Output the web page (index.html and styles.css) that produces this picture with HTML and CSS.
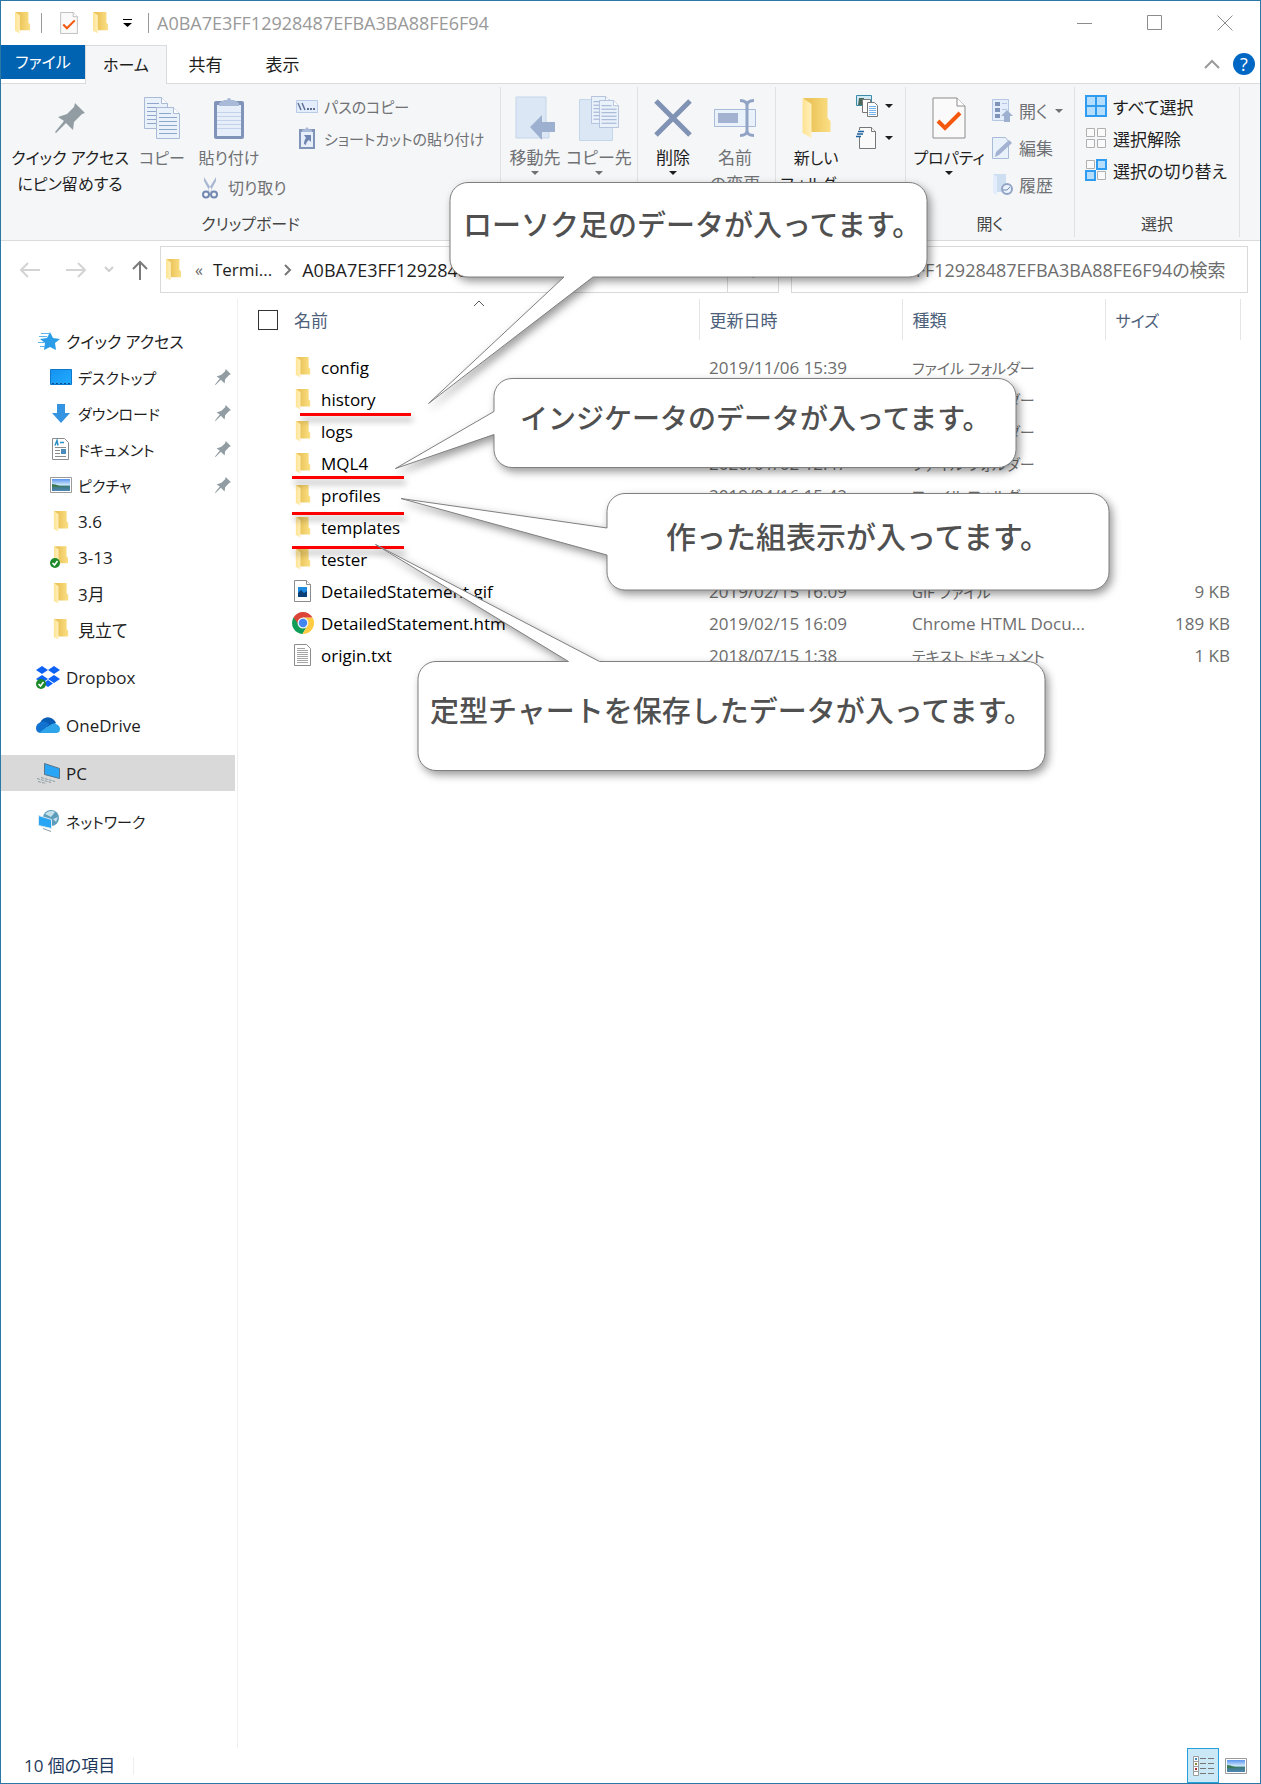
FILE: index.html
```html
<!DOCTYPE html>
<html lang="ja">
<head>
<meta charset="utf-8">
<meta name="viewport" content="width=device-width, initial-scale=1">
<title>A0BA7E3FF12928487EFBA3BA88FE6F94</title>
<link rel="stylesheet" href="styles.css">
</head>
<body>
<svg class="defs" aria-hidden="true">
  <defs>
    <linearGradient id="fold" x1="0" x2="1"><stop offset=".3" stop-color="#ecc65c"/><stop offset="1" stop-color="#fbdf85"/></linearGradient>
    <linearGradient id="flap" x1="0" x2="1"><stop offset="0" stop-color="#ffe391"/><stop offset="1" stop-color="#ffefbc"/></linearGradient>
    <linearGradient id="sky" x1="0" y1="0" x2="0" y2="1"><stop offset="0" stop-color="#5b95ee"/><stop offset=".5" stop-color="#cfe9fb"/><stop offset=".6" stop-color="#3d7a78"/><stop offset="1" stop-color="#4f86b8"/></linearGradient>
    <linearGradient id="blue" x1="0" y1="0" x2="1" y2="1"><stop offset="0" stop-color="#1492f0"/><stop offset="1" stop-color="#22acff"/></linearGradient>
    <symbol id="folder" viewBox="0 0 28 41"><path fill="url(#fold)" d="M1 0h24v20l3 3v11H9z"/><path fill="url(#flap)" d="M0 0l9 6v34l-9-5z"/></symbol>
    <symbol id="pin" viewBox="0 0 30 30"><path fill="#929da3" d="M20 0l10 10-3 1-8 8-1 8-7-7L1 30l-1-1 9-11-6-4 9-3 7-7z"/></symbol>
    <symbol id="caret" viewBox="0 0 8 4"><path fill="currentColor" d="M0 0h8L4 4z"/></symbol>
    <symbol id="page" viewBox="0 0 24 32" preserveAspectRatio="none"><path fill="#e9f1fb" stroke="#a9b9d6" d="M.5.5h17l6 6v25H.5z"/><path fill="#fff" stroke="#a9b9d6" d="M17.500.5v6h6"/><path stroke="#8fa5c9" d="M3 6.500h12M3 10.500h18M3 14.500h18M3 18.500h18M3 22.500h18M3 26.500h18"/></symbol>
    <symbol id="check-page" viewBox="0 0 34 42"><path fill="#fafafa" stroke="#8c8c8c" d="M1 1h24l8 8v32H1z"/><path fill="#fff" stroke="#8c8c8c" d="M25 1v8h8"/><path fill="none" stroke="#f4580d" stroke-width="4" d="M6 24l7 7 15-15"/></symbol>
    <symbol id="ok" viewBox="0 0 10 10"><circle cx="5" cy="5" r="5" fill="#1c8a2b"/><path fill="none" stroke="#fff" stroke-width="1.600" d="M2.500 5l2 2 3-4"/></symbol>
    <symbol id="photo" viewBox="0 0 22 16"><path fill="#fff" stroke="#9b9b9b" d="M.5.5h21v15H.5z"/><path fill="url(#sky)" d="M2 2h18v12H2z"/><path fill="#3b7a55" d="M2 7c5 0 8 3 12 3H2z"/></symbol>
  </defs>
</svg>

<div class="window">
  <header class="titlebar">
    <svg class="folder-sm" aria-hidden="true"><use href="#folder"/></svg>
    <span class="bar"></span>
    <button class="quick" aria-label="プロパティ"><svg width="18" height="22"><use href="#check-page"/></svg></button>
    <button class="quick quick-folder" aria-label="新しいフォルダー"><svg class="folder-sm"><use href="#folder"/></svg></button>
    <button class="quick quick-more" aria-label="カスタマイズ"><svg width="9" height="8" viewBox="0 0 9 8"><path d="M0 0h9v1H0zM0 4h9L4.500 8z"/></svg></button>
    <span class="bar"></span>
    <h1>A0BA7E3FF12928487EFBA3BA88FE6F94</h1>
    <div class="controls">
      <button aria-label="最小化"><svg width="16" height="16"><path d="M0 8.500h15"/></svg></button>
      <button aria-label="最大化"><svg width="16" height="16"><path d="M.5.5h14v14H.5z"/></svg></button>
      <button aria-label="閉じる"><svg width="16" height="16"><path d="M.5.5l15 15M15.500.5l-15 15"/></svg></button>
    </div>
  </header>

  <nav class="tabs">
    <button class="tab tab-file">ファイル</button>
    <button class="tab tab-active">ホーム</button>
    <button class="tab">共有</button>
    <button class="tab">表示</button>
    <div class="tabs-end">
      <button aria-label="リボンの最小化"><svg width="16" height="10"><path fill="none" stroke="#9a9a9a" stroke-width="2" d="M1 9l7-7 7 7"/></svg></button>
      <button class="help" aria-label="ヘルプ">?</button>
    </div>
  </nav>

  <section class="ribbon">
    <div class="group g-clip">
      <div class="group-body">
        <button class="big w-pin"><span class="ico"><svg width="30" height="30"><use href="#pin"/></svg></span><span>クイック アクセス<br>にピン留めする</span></button>
        <button class="big w-copy off"><span class="ico"><svg width="36" height="42" viewBox="0 0 36 42"><use href="#page" width="24" height="32"/><use href="#page" x="12" y="10" width="24" height="32"/></svg></span><span>コピー</span></button>
        <div class="paste-col">
          <button class="big w-paste off"><span class="ico"><svg width="30" height="42" viewBox="0 0 30 42"><rect y="4" width="30" height="38" rx="2" fill="#7f94b8"/><path fill="#e6eefa" d="M3 8h24v31H3z"/><path stroke="#c3d2ea" d="M3 15.500h24M3 19.500h24M3 23.500h24M3 27.500h24M3 31.500h24"/><path fill="#a9bad8" d="M5 9V6l5-3h3a2 2 0 0 1 4 0h3l5 3v3z"/></svg></span><span>貼り付け</span></button>
          <button class="small off"><svg width="16" height="23" viewBox="0 0 16 23"><path fill="#a9b8d2" d="M2 1l8 13-2 2L2 5zM14 1L6 14l2 2 6-11z"/><g fill="none" stroke="#7388b0" stroke-width="2"><circle cx="4" cy="18.500" r="3"/><circle cx="12" cy="18.500" r="3"/></g></svg><span>切り取り</span></button>
        </div>
        <div class="list list-kana">
          <button class="small off"><svg width="22" height="13" viewBox="0 0 22 13"><path fill="#e3edfb" stroke="#b9cae6" d="M.5.5h21v12H.5z"/><path stroke="#5d6f93" stroke-width="1.500" d="M2 3l3 7M6 3l3 7"/><path fill="#5d6f93" d="M11 8h2v2h-2zM14 8h2v2h-2zM17 8h2v2h-2z"/></svg><span>パスのコピー</span></button>
          <button class="small off"><svg width="22" height="22" viewBox="0 0 22 22"><path fill="#7f94b8" d="M3 2h16v20H3z"/><path fill="#e6eefa" d="M5 5h12v15H5z"/><path fill="#a9bad8" d="M6 5V3l3-1 2-2 2 2 3 1v2z"/><path fill="#6f86b0" d="M8 8h7v7l-2-2c-2 1-3 3-3 5l-2-1c0-3 1-5 2-6z"/></svg><span>ショートカットの貼り付け</span></button>
        </div>
      </div>
      <div class="group-label">クリップボード</div>
    </div>

    <div class="group g-move">
      <div class="group-body">
        <button class="big w-move off"><span class="ico"><svg width="40" height="44" viewBox="0 0 40 44"><path fill="#dce7f6" stroke="#c5d5ea" d="M1 1h30v25l3 4v12H1z"/><path fill="#9eb0cf" d="M15 31l12-12v7h13v10H27v8z"/></svg></span><span>移動先</span><svg class="caret"><use href="#caret"/></svg></button>
        <button class="big w-move off"><span class="ico"><svg width="40" height="46" viewBox="0 0 40 46"><path fill="#dce7f6" stroke="#c5d5ea" d="M.5 4.500h30v24l3 4v13H.5z"/><use href="#page" x="12" y="1" width="20" height="28"/><use href="#page" x="20" y="5" width="20" height="28"/></svg></span><span>コピー先</span><svg class="caret"><use href="#caret"/></svg></button>
      </div>
    </div>

    <div class="group g-edit">
      <div class="group-body">
        <button class="big w-del"><span class="ico"><svg width="38" height="38"><path stroke="#8093b5" stroke-width="5" d="M2 2l34 34M36 2L2 36"/></svg></span><span>削除</span><svg class="caret"><use href="#caret"/></svg></button>
        <button class="big w-ren off"><span class="ico"><svg width="42" height="38" viewBox="0 0 42 38"><path fill="#e9f1fb" stroke="#a9bbd9" d="M.5 10.500h41v17H.5z"/><path fill="#a2b2d0" d="M4 14h20v10H4z"/><path fill="none" stroke="#92a4c6" stroke-width="3" d="M26 1.500c5 0 7 2 7 5v25c0 3-2 5-7 5M40 1.500c-5 0-7 2-7 5v25c0 3 2 5 7 5"/></svg></span><span>名前<br>の変更</span></button>
      </div>
    </div>

    <div class="group g-new">
      <div class="group-body">
        <button class="big w-new"><span class="ico"><svg width="29" height="41"><use href="#folder"/></svg></span><span>新しい<br>フォルダー</span></button>
        <div class="list">
          <button class="small" aria-label="新しいアイテム"><svg width="22" height="22" viewBox="0 0 22 22"><path fill="#cfeaf5" stroke="#3c8ca8" d="M.5.5h15v10H.5z"/><path fill="#4b6b5a" d="M3 3h5v7H2z"/><path fill="#fff" stroke="#777" d="M6.500 4.500h8v13h-8z"/><path fill="#fff" stroke="#777" d="M11.500 7.500h7l3 3v11h-10z"/><path stroke="#78b4ec" d="M13 11.500h7M13 13.500h7M13 15.500h7M13 17.500h7M13 19.500h7"/></svg><svg class="caret"><use href="#caret"/></svg></button>
          <button class="small" aria-label="ショートカット"><svg width="22" height="22" viewBox="0 0 22 22"><path fill="#fafafa" stroke="#777" d="M3.500.5h12l4 4v17h-16z"/><path fill="#fff" stroke="#777" d="M15.500.5v4h4"/><path stroke="#f5f6f7" stroke-width="7" d="M0 6.500h4"/><path stroke="#1f62a0" stroke-width="1.500" d="M2 4.500h6M1 7h6M0 9.500h5"/></svg><svg class="caret"><use href="#caret"/></svg></button>
        </div>
      </div>
    </div>

    <div class="group g-open">
      <div class="group-body">
        <button class="big w-prop"><span class="ico"><svg width="34" height="42"><use href="#check-page"/></svg></span><span>プロパティ</span><svg class="caret"><use href="#caret"/></svg></button>
        <div class="list list-tall">
          <button class="small off"><svg width="21" height="23" viewBox="0 0 21 23"><path fill="#e3edfb" stroke="#b5c6e2" d="M.5.5h16v21H.5z"/><path fill="#7f94b8" d="M3 3h5v4H3zM3 9h5v4H3zM3 15h5v4H3z"/><path stroke="#b5c6e2" d="M10 4.500h5M10 10.500h5"/><path fill="#9eb0cf" d="M15 11l6 6h-3v6h-6v-6H9z"/></svg><span>開く</span><svg class="caret"><use href="#caret"/></svg></button>
          <button class="small off"><svg width="21" height="23" viewBox="0 0 21 23"><path fill="#e9f1fb" stroke="#a9bbd9" d="M.5 1.500h13l3 4v17H.5z"/><path fill="#a2b2d0" d="M17 4l3 3L7 19l-4 2 1-5z"/></svg><span>編集</span></button>
          <button class="small off"><svg width="21" height="23" viewBox="0 0 21 23"><path fill="#cfdff2" d="M1 1h13v18H5z"/><path fill="#e3edfb" d="M1 1l4 3v18l-4-2z"/><circle cx="15" cy="16" r="5" fill="#e9f1fb" stroke="#92a4c6" stroke-width="2"/><path fill="none" stroke="#7388b0" d="M11 17h4l3-3"/></svg><span>履歴</span></button>
        </div>
      </div>
      <div class="group-label">開く</div>
    </div>

    <div class="group g-select">
      <div class="group-body">
        <div class="list">
          <button class="small"><svg width="22" height="22" viewBox="0 0 22 22"><path fill="#b5defc" stroke="#2e9cf0" stroke-width="2" d="M1 1h20v20H1zM11 1v20M1 11h20"/></svg><span>すべて選択</span></button>
          <button class="small"><svg width="22" height="22" viewBox="0 0 22 22"><path fill="#fafafa" stroke="#b0b0b0" d="M1.500 1.500h8v8h-8zM12.500 1.500h8v8h-8zM1.500 12.500h8v8h-8zM12.500 12.500h8v8h-8z"/></svg><span>選択解除</span></button>
          <button class="small"><svg width="22" height="22" viewBox="0 0 22 22"><path fill="#fafafa" stroke="#b0b0b0" d="M1.500 1.500h8v8h-8zM12.500 12.500h8v8h-8z"/><path fill="#b5defc" stroke="#2e9cf0" stroke-width="2" d="M12 1h9v9h-9zM1 12h9v9H1z"/></svg><span>選択の切り替え</span></button>
        </div>
      </div>
      <div class="group-label">選択</div>
    </div>
  </section>

  <div class="navbar">
    <div class="history">
      <button class="back" aria-label="戻る"><svg width="20" height="16"><path stroke="#d4d4d4" stroke-width="2" fill="none" d="M20 8H2M8 1L1 8l7 7"/></svg></button>
      <button aria-label="進む"><svg width="20" height="16"><path stroke="#d4d4d4" stroke-width="2" fill="none" d="M0 8h18M12 1l7 7-7 7"/></svg></button>
      <button aria-label="最近表示した場所"><svg width="10" height="7"><path stroke="#cfcfcf" stroke-width="2" fill="none" d="M1 1l4 4 4-4"/></svg></button>
      <button aria-label="上へ"><svg width="16" height="20"><path stroke="#7a7a7a" stroke-width="2" fill="none" d="M8 20V2M1 9l7-7 7 7"/></svg></button>
    </div>
    <div class="address">
      <svg class="folder-sm" aria-hidden="true"><use href="#folder"/></svg>
      <span class="more">«</span>
      <a href="#terminal">Termi...</a>
      <svg width="8" height="12" aria-hidden="true"><path stroke="#777" stroke-width="2" fill="none" d="M1 1l5 5-5 5"/></svg>
      <a class="current" href="#current">A0BA7E3FF12928487EFBA3BA88FE6F94</a>
      <button class="refresh" aria-label="更新"><svg width="16" height="16"><path fill="none" stroke="#777" stroke-width="2" d="M13 5a6 6 0 1 0 1 4M14 1v5H9"/></svg></button>
    </div>
    <input class="search" type="search" aria-label="検索" placeholder="A0BA7E3FF12928487EFBA3BA88FE6F94の検索">
  </div>

  <div class="content">
    <nav class="sidebar">
      <ul>
        <li class="quick-root"><a href="#quick"><svg width="24" height="20" viewBox="0 0 24 20"><path fill="#2a9ce8" d="M14 1l3 6 7 1-5 4 1 7-6-3-6 3 1-7-5-4 7-1z"/><path stroke="#5ab4ee" d="M5 2.500h8M3 5.500h8M2 11.500h6M4 15.500h5"/></svg>クイック アクセス</a></li>
        <li class="sub kana"><a href="#desktop"><svg width="22" height="16"><path fill="url(#blue)" stroke="#0f78cb" d="M.5.5h21v15H.5z"/><path stroke="#0b4f8a" stroke-dasharray="2 2" d="M2 14.500h18"/></svg>デスクトップ</a><svg class="pinned"><use href="#pin"/></svg></li>
        <li class="sub kana"><a href="#downloads"><svg width="22" height="19"><path fill="#3594e2" d="M7 0h8v9h5l-9 10L2 9h5z"/></svg>ダウンロード</a><svg class="pinned"><use href="#pin"/></svg></li>
        <li class="sub kana"><a href="#documents"><svg width="22" height="22"><path fill="#fff" stroke="#8c8c8c" d="M2.500.5h12l4 4v17h-16z"/><path stroke="#2b8fc4" fill="none" stroke-width="1.500" d="M5 7.500l2-5 1 5M10 4.500h4"/><path stroke="#8c8c8c" d="M5 9.500h11M5 12.500h5M5 15.500h5M5 18.500h11"/><path fill="#4b8bbb" d="M11 11h5v5h-5z"/></svg>ドキュメント</a><svg class="pinned"><use href="#pin"/></svg></li>
        <li class="sub kana"><a href="#pictures"><svg width="22" height="16"><use href="#photo"/></svg>ピクチャ</a><svg class="pinned"><use href="#pin"/></svg></li>
        <li class="sub"><a href="#f36"><svg class="folder-nav"><use href="#folder"/></svg>3.6</a></li>
        <li class="sub"><a href="#f313"><svg width="22" height="22"><use href="#folder" x="4" width="14" height="21"/><use href="#ok" y="12" width="10" height="10"/></svg>3-13</a></li>
        <li class="sub"><a href="#f3"><svg class="folder-nav"><use href="#folder"/></svg>3月</a></li>
        <li class="sub"><a href="#mitate"><svg class="folder-nav"><use href="#folder"/></svg>見立て</a></li>
        <li class="top"><a href="#dropbox"><svg width="24" height="23" viewBox="0 0 24 23"><path fill="#0d63f5" d="M6 0l6 4-6 4-6-4zM18 0l6 4-6 4-6-4zM6 9l6 4-6 4-6-4zM18 9l6 4-6 4-6-4zM12 14l5 3.500-5 3.500-5-3.500z"/><use href="#ok" y="13" width="10" height="10"/></svg>Dropbox</a></li>
        <li class="top"><a href="#onedrive"><svg width="24" height="16" viewBox="0 0 24 16"><path fill="#0a5db4" d="M4 6C6 1 11-1 15 1c3 1 4 3 5 5l-8 5z"/><path fill="#1173cf" d="M5 5c3-1 6 0 8 2L7 16H5C1 16 0 13 0 11c0-3 2-5 5-6z"/><path fill="#2ea5ea" d="M4 15l10-7c2-1 4-2 6-1 3 1 4 3 4 5 0 3-2 4-4 4H5z"/></svg>OneDrive</a></li>
        <li class="top selected"><a href="#pc" aria-current="page"><svg width="24" height="21" viewBox="0 0 24 21"><path fill="#29a5f5" stroke="#56748a" d="M8.500.5l15 5v10l-15-4z"/><path stroke="#8a9aa5" stroke-dasharray="3 1" d="M1 15.500l14 4M5 14.500l14 4M2 18.500l8 2"/></svg>PC</a></li>
        <li class="top kana"><a href="#network"><svg width="24" height="22" viewBox="0 0 24 22"><circle cx="15" cy="8" r="8" fill="#5b9dbb"/><path fill="#c6e0ea" d="M9 4c4-4 8-3 10-2l-4 5zM17 9l5-2-2 5z"/><path fill="#29a5f5" stroke="#dfeaf0" d="M2.500 5.500l13 4v9l-13-3z"/><path stroke="#8a9aa5" d="M7 18.500l8 3"/></svg>ネットワーク</a></li>
      </ul>
    </nav>

    <main class="files">
      <table>
        <colgroup><col class="c-check"><col><col class="c-date"><col class="c-type"><col class="c-size"><col class="c-end"></colgroup>
        <thead>
          <tr>
            <th><input type="checkbox" aria-label="すべて選択"></th>
            <th class="h-name line">名前<svg class="sort" width="12" height="7"><path fill="none" stroke="#555" d="M1 6l5-5 5 5"/></svg></th>
            <th class="line">更新日時</th><th class="line">種類</th><th class="line h-size">サイズ</th><th></th>
          </tr>
        </thead>
        <tbody>
          <tr><td></td><td class="name"><span><svg class="folder-row"><use href="#folder"/></svg>config</span></td><td>2019/11/06 15:39</td><td class="kana">ファイル フォルダー</td><td></td><td></td></tr>
          <tr><td></td><td class="name"><span><svg class="folder-row"><use href="#folder"/></svg>history</span></td><td></td><td class="kana">ファイル フォルダー</td><td></td><td></td></tr>
          <tr><td></td><td class="name"><span><svg class="folder-row"><use href="#folder"/></svg>logs</span></td><td></td><td class="kana">ファイル フォルダー</td><td></td><td></td></tr>
          <tr><td></td><td class="name"><span><svg class="folder-row"><use href="#folder"/></svg>MQL4</span></td><td>2020/01/02 12:47</td><td class="kana">ファイル フォルダー</td><td></td><td></td></tr>
          <tr><td></td><td class="name"><span><svg class="folder-row"><use href="#folder"/></svg>profiles</span></td><td>2019/04/16 15:42</td><td class="kana">ファイル フォルダー</td><td></td><td></td></tr>
          <tr><td></td><td class="name"><span><svg class="folder-row"><use href="#folder"/></svg>templates</span></td><td></td><td></td><td></td><td></td></tr>
          <tr><td></td><td class="name"><span><svg class="folder-row"><use href="#folder"/></svg>tester</span></td><td></td><td></td><td></td><td></td></tr>
          <tr><td></td><td class="name"><span><svg width="22" height="22"><path fill="#fff" stroke="#8c8c8c" d="M2.500.5h12l4 4v17h-16z"/><path fill="#fff" stroke="#8c8c8c" d="M14.500.5v4h4"/><path fill="#1e8ae0" d="M6 7h9v10H6z"/><path fill="#0b3f78" d="M6 17v-4l3-3 3 3 3-2v6z"/></svg>DetailedStatement.gif</span></td><td>2019/02/15 16:09</td><td class="kana">GIF ファイル</td><td class="size">9 KB</td><td></td></tr>
          <tr><td></td><td class="name"><span><svg width="22" height="22" viewBox="0 0 22 22"><path fill="#0f9d58" d="M1.500 5.500a11 11 0 0 0 9 16.500l5-8.500L11 11z"/><path fill="#fc4" d="M10.500 22a11 11 0 0 0 10-16.500H11l4.500 8z"/><path fill="#db4437" d="M1.500 5.500a11 11 0 0 1 19 0H11L7 13z"/><circle cx="11" cy="11" r="5.500" fill="#f1f1f1"/><circle cx="11" cy="11" r="4.200" fill="#4285f4"/></svg>DetailedStatement.htm</span></td><td>2019/02/15 16:09</td><td>Chrome HTML Docu...</td><td class="size">189 KB</td><td></td></tr>
          <tr><td></td><td class="name"><span><svg width="22" height="22"><path fill="#fff" stroke="#8c8c8c" d="M2.500.5h12l4 4v17h-16z"/><path stroke="#a5a5a5" d="M5 4.500h8M5 6.500h11M5 8.500h11M5 10.500h11M5 12.500h11M5 14.500h11M5 16.500h11M5 18.500h11"/></svg>origin.txt</span></td><td>2018/07/15 1:38</td><td class="kana">テキスト ドキュメント</td><td class="size">1 KB</td><td></td></tr>
        </tbody>
      </table>
    </main>
  </div>

  <footer class="status">
    <span>10 個の項目</span>
    <div class="views">
      <button class="view-on" aria-label="詳細"><svg width="22" height="22" viewBox="0 0 22 22"><path fill="#fff" stroke="#9b9b9b" d="M1.500 1.500h5v5h-5zM1.500 6.500h5v5h-5zM1.500 11.500h5v5h-5zM1.500 16.500h5v4h-5z"/><path fill="#3f87b5" d="M3 3h2v2H3z"/><path fill="#8a8438" d="M3 8h2v2H3z"/><path fill="#a33" d="M3 13h2v2H3z"/><path stroke="#777" d="M8 3.500h6M16 3.500h6M8 8.500h6M16 8.500h6M8 13.500h6M16 13.500h6M8 18.500h6M16 18.500h6"/></svg></button>
      <button aria-label="大アイコン"><svg width="22" height="16"><use href="#photo"/></svg></button>
    </div>
  </footer>

  <div class="notes">
    <svg class="shapes" aria-hidden="true">
      <g class="marks"><path d="M300 414.500h111M292 477.500h112M292 513.500h112M292 547.500h112"/></g>
      <g class="bubbles">
        <path d="M468 182.500H909a18 18 0 0 1 18 18V259a18 18 0 0 1-18 18H593L428.500 403.500 564 277H468a18 18 0 0 1-18-18V200.500a18 18 0 0 1 18-18z"/>
        <path d="M512 378.500H998a18 18 0 0 1 18 18V449.500a18 18 0 0 1-18 18H512a18 18 0 0 1-18-18V434.500L395.500 468.500 494 411.500V396.500a18 18 0 0 1 18-18z"/>
        <path d="M625 493.500H1091a18 18 0 0 1 18 18V572a18 18 0 0 1-18 18H625a18 18 0 0 1-18-18V555L401 498.500 607 528V511.500a18 18 0 0 1 18-18z"/>
        <path d="M436 661.500H568.500L375.500 544.500 599.500 661.500H1027a18 18 0 0 1 18 18V752.500a18 18 0 0 1-18 18H436a18 18 0 0 1-18-18V679.500a18 18 0 0 1 18-18z"/>
      </g>
    </svg>
    <p class="note n1">ローソク足のデータが入ってます。</p>
    <p class="note n2">インジケータのデータが入ってます。</p>
    <p class="note n3">作った組表示が入ってます。</p>
    <p class="note n4">定型チャートを保存したデータが入ってます。</p>
  </div>
</div>
</body>
</html>
```
FILE: styles.css
```css
* { box-sizing: border-box; }

body {
  margin: 0;
  font-family: "Open Sans", "Noto Sans CJK JP", sans-serif;
  font-size: 16px;
  font-feature-settings: "palt";
  color: #1e1e1e;
  background: #fff;
}

button, input {
  font: inherit;
  font-feature-settings: inherit;
  color: inherit;
}

button {
  padding: 0;
  border: 0;
  background: none;
}

a { color: inherit; text-decoration: none; }
svg { flex: none; display: block; }
.defs { position: absolute; width: 0; height: 0; }

.window {
  position: relative;
  display: flex;
  flex-direction: column;
  min-height: 100vh;
  border: 1px solid #2b78a4;
  overflow: hidden;
}

.folder-sm { width: 15px; height: 22px; }

/* Title bar */
.titlebar {
  display: flex;
  align-items: center;
  height: 44px;
  padding-left: 14px;
}
.bar { width: 1px; height: 20px; margin-left: 11px; background: #999; }
.quick { margin-left: 18px; }
.quick-folder { margin-left: 15px; }
.quick-more { margin-left: 15px; }
.quick-more + .bar { margin-left: 16px; }
.titlebar h1 {
  margin: 0 0 0 8px;
  font-size: 18px;
  font-weight: 400;
  line-height: 24px;
  color: #999;
}
.controls { display: flex; margin-left: auto; }
.controls button { display: grid; place-items: center; width: 70px; height: 44px; }
.controls path { fill: none; stroke: #8c8c8c; }

/* Ribbon tabs */
.tabs {
  display: flex;
  height: 39px;
  border-bottom: 1px solid #dadbdc;
}
.tab { width: 77px; padding-bottom: 2px; font-size: 17px; }
.tab-file { width: 84px; height: 34px; background: #0063b1; color: #fff; font-size: 16px; }
.tab-active {
  width: 82px;
  height: 39px;
  background: #f5f6f7;
  border: 1px solid #dadbdc;
  border-bottom: 0;
  font-size: 16px;
}
.tabs-end { display: flex; align-items: center; gap: 13px; margin-left: auto; padding-right: 5px; }
.help {
  width: 22px;
  height: 22px;
  border-radius: 50%;
  background: #0067c5;
  color: #fff;
  font-size: 18px;
  line-height: 22px;
}

/* Ribbon */
.ribbon {
  display: flex;
  height: 157px;
  background: #f5f6f7;
  border-bottom: 1px solid #dadbdc;
}
.group {
  display: flex;
  flex-direction: column;
  flex: none;
  margin: 3px 0;
  border-right: 1px solid #e0e1e3;
}
.g-clip { width: 500px; }
.g-move { width: 137px; padding-left: 2px; }
.g-edit { width: 138px; }
.g-new { width: 130px; }
.g-open { width: 169px; }
.g-select { width: 165px; }
.g-select .group-body { padding-left: 10px; }
.g-select .small, .list-tall .small { font-size: 17px; }
.group-body { display: flex; flex: 1; min-height: 0; }
.group-label { height: 26px; text-align: center; line-height: 26px; color: #444; }

.big {
  display: flex;
  flex-direction: column;
  align-items: center;
  height: 112px;
  padding-top: 8px;
  line-height: 26px;
  white-space: nowrap;
}
.ico { display: grid; place-items: center; height: 46px; margin-bottom: 4px; }
.caret { width: 8px; height: 4px; }
.off { color: #6f7175; }
.w-pin { width: 138px; }
.w-copy { width: 46px; }
.w-paste { width: 88px; height: 84px; }
.w-move { width: 64px; font-size: 17px; }
.w-del { width: 70px; font-size: 17px; }
.w-ren { width: 54px; font-size: 17px; }
.w-new { width: 80px; }
.w-prop { width: 86px; }
.paste-col { display: flex; flex-direction: column; width: 111px; }
.paste-col .small { margin-left: 17px; gap: 10px; }

.list { padding-top: 3px; }
.list-kana { font-size: 15px; }
.small {
  display: flex;
  align-items: center;
  gap: 6px;
  height: 32px;
  white-space: nowrap;
}
.small .caret { margin-left: 1px; }
.list-tall { padding-top: 5px; }
.list-tall .small { height: 37px; }

/* Address row */
.navbar {
  display: flex;
  gap: 12px;
  padding: 5px 12px 6px 19px;
}
.history { display: flex; align-items: center; gap: 18px; width: 128px; }
.back { margin-right: 8px; }
.address, .search {
  height: 47px;
  border: 1px solid #d9d9d9;
  background: #fff;
  font-size: 18px;
}
.address {
  display: flex;
  align-items: center;
  flex: 1 1 620px;
  min-width: 0;
  padding-left: 5px;
}
.more { margin: 0 10px 0 14px; color: #666; font-size: 16px; }
.address a { margin-right: 12px; font-size: 17px; }
.address .current { flex: 1; margin: 0 0 0 10px; font-size: 18px; }
.refresh { display: grid; place-items: center; width: 51px; height: 45px; border-left: 1px solid #d9d9d9; }
.search { flex: 1 1 457px; min-width: 0; margin: 0; padding: 0 0 0 48px; }
.search::placeholder { color: #6d6d6d; opacity: 1; }

/* Body */
.content { display: flex; flex: 1; }
.sidebar {
  flex: none;
  width: 237px;
  padding: 24px 2px 0 0;
  border-right: 1px solid #efefef;
}
.sidebar ul { margin: 0; padding: 0; list-style: none; font-size: 17px; }
.sidebar li { display: flex; align-items: center; height: 36px; padding: 0 4px 0 35px; }
.sidebar .quick-root { font-size: 16px; }
.sidebar .kana { font-size: 15px; }
.sidebar .sub { padding-left: 49px; }
.sidebar .top { margin-top: 12px; }
.sidebar .selected { background: #d9d9d9; }
.sidebar a { display: flex; align-items: center; flex: 1; gap: 6px; }
.pinned { width: 16px; height: 16px; }
.folder-nav, .folder-row { width: 22px; height: 21px; }

.files { flex: 1; min-width: 0; }
.files table { width: 100%; table-layout: fixed; border-collapse: collapse; }
.c-check { width: 47px; }
.c-date, .c-type { width: 203px; }
.c-size { width: 135px; }
.c-end { width: 20px; }
.files th {
  height: 41px;
  padding: 0 10px;
  font-size: 17px;
  font-weight: 400;
  text-align: left;
  color: #4c607a;
}
.files th.line { border-right: 1px solid #e5e5e5; }
.files th.h-name { padding-left: 9px; }
.files th.h-size { font-size: 16px; }
.files th:first-child { padding: 0 0 0 20px; }
.h-name { position: relative; }
.sort { position: absolute; left: 188px; top: 1px; }
.files input {
  appearance: none;
  display: block;
  width: 20px;
  height: 20px;
  margin: 0;
  border: 1px solid #333;
  background: #fff;
}
.files tbody::before { content: ""; display: block; height: 11px; }
.files td {
  height: 32px;
  padding: 0 10px;
  font-size: 17px;
  white-space: nowrap;
  color: #6d6d6d;
}
.files .kana { font-size: 15px; }
.files .name { padding-left: 7px; color: #000; }
.name span { display: flex; align-items: center; gap: 7px; }
.files .size { text-align: right; }

/* Status bar */
.status {
  display: flex;
  align-items: center;
  height: 35px;
  padding: 0 13px 0 23px;
  font-size: 17px;
  color: #1e395b;
}
.status span { padding-right: 18px; border-right: 1px solid #eee; line-height: 18px; }
.views { display: flex; align-items: center; gap: 6px; margin-left: auto; }
.view-on {
  display: grid;
  place-items: center;
  width: 32px;
  height: 35px;
  border: 1px solid #26a0da;
  background: #cbe8f6;
}

/* Callouts drawn over the window */
.notes { position: absolute; top: -1px; left: -1px; pointer-events: none; }
.shapes { width: 1261px; height: 800px; }
.marks { fill: none; stroke: #f00; stroke-width: 3; filter: drop-shadow(2px 5px 3px rgba(0, 0, 0, .35)); }
.bubbles path { fill: #fff; stroke: #7f7f7f; filter: drop-shadow(3px 4px 4px rgba(0, 0, 0, .4)); }
.note {
  position: absolute;
  margin: 0;
  font-size: 29px;
  font-weight: 500;
  font-feature-settings: normal;
  line-height: 40px;
  white-space: nowrap;
  color: #505050;
}
.n1 { left: 463px; top: 205px; }
.n2 { left: 520px; top: 398px; font-size: 28px; }
.n3 { left: 666px; top: 517px; font-size: 30px; }
.n4 { left: 430px; top: 691px; }
```
